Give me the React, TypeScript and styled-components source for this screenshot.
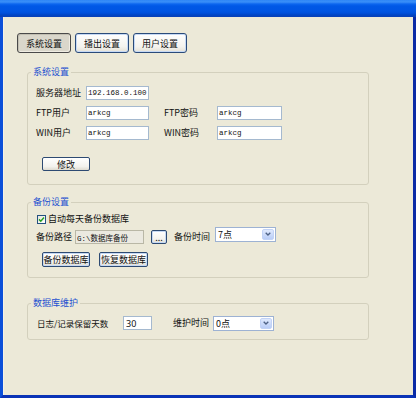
import React from "react";
import styled, { createGlobalStyle, css } from "styled-components";

const Global = createGlobalStyle`
  html, body { margin: 0; padding: 0; background: #ECE9D8; }
  * { box-sizing: border-box; }
`;

const CJK = `"Noto Sans CJK SC", "Noto Sans", sans-serif`;
const MONO = `"Liberation Mono", "Noto Sans CJK SC", monospace`;

const Window = styled.div`
  width: 416px;
  height: 398px;
  display: flex;
  flex-direction: column;
  background: #0a4fd8;
  font-family: ${CJK};
  font-size: 9px;
  color: #000;
`;

const TitleBar = styled.div`
  height: 17px;
  flex: none;
  background: linear-gradient(
    to bottom,
    #2f86f6 0px,
    #3a8ff8 2px,
    #0c66ef 4px,
    #0058e6 6px,
    #0055e3 11px,
    #0050dc 13px,
    #0045c4 15px,
    #0a3fb6 17px
  );
`;

const Frame = styled.div`
  flex: 1;
  display: flex;
  border-left: 3px solid #0b4fd9;
  border-right: 3px solid #0a2aa6;
  border-bottom: 3px solid #0a33b6;
  min-height: 0;
`;

const Client = styled.div`
  flex: 1;
  background: #ECE9D8;
  padding: 16px 0 0 14px;
  display: flex;
  flex-direction: column;
  box-shadow: inset 1px 0 0 #f4f1e6;
`;

const TabRow = styled.div`
  display: flex;
  gap: 4px;
`;

const TabButton = styled.div<{ $active?: boolean }>`
  width: 54px;
  height: 20px;
  display: flex;
  align-items: center;
  justify-content: center;
  border-radius: 3px;
  font-size: 9px;
  color: #111;
  ${(p) =>
    p.$active
      ? css`
          border: 1px solid #4a4a4a;
          background: #dad7cb;
          box-shadow: inset 1px 1px 0 #c2bfb2, inset -1px -1px 0 #efece2;
        `
      : css`
          border: 1px solid #2a4b7a;
          background: linear-gradient(#ffffff, #f4f3ee 70%, #e4e1d6);
          box-shadow: inset 0 0 0 1px #c6d9f4;
        `}
`;

const Groups = styled.div`
  margin-left: 10px;
  margin-top: 13px;
  width: 342px;
  display: flex;
  flex-direction: column;
`;

const Group = styled.fieldset<{ $pt: number; $pb: number; $mt?: number }>`
  margin: ${(p) => p.$mt ?? 0}px 0 0 0;
  padding: ${(p) => p.$pt}px 0 ${(p) => p.$pb}px 8px;
  border: 1px solid #d3d0bd;
  border-radius: 3px;
  min-width: 0;
`;

const Legend = styled.legend`
  margin-left: -5px;
  padding: 0 2px;
  height: 12px;
  line-height: 12px;
  font-size: 9px;
  color: #1d50d0;
`;

const FormGrid = styled.div`
  display: grid;
  grid-template-columns: 50px 63px 68px 65px;
  grid-auto-rows: 14px;
  row-gap: 6px;
  align-items: center;
`;

const Label = styled.span<{ $w?: number; $pl?: number; $fs?: number }>`
  display: inline-block;
  flex: none;
  ${(p) => (p.$w ? `width: ${p.$w}px;` : "")}
  padding-left: ${(p) => p.$pl ?? 0}px;
  font-size: ${(p) => p.$fs ?? 9}px;
  line-height: 12px;
  white-space: nowrap;
  color: #111;
`;

const TextField = styled.input<{ $w: number; $disabled?: boolean }>`
  width: ${(p) => p.$w}px;
  height: 14px;
  flex: none;
  margin: 0;
  padding: 0 1px;
  border: 1px solid ${(p) => (p.$disabled ? "#b9b7a6" : "#a5b9cf")};
  background: ${(p) => (p.$disabled ? "#ebe9e0" : "#fff")};
  font-family: ${MONO};
  font-size: 7.5px;
  color: #111;
  outline: none;
  border-radius: 0;
`;

const NumField = styled(TextField)`
  font-family: "Noto Sans", sans-serif;
  font-size: 9px;
  padding: 0 2px;
`;

const Row = styled.div<{ $mt?: number }>`
  display: flex;
  align-items: center;
  height: 14px;
  margin-top: ${(p) => p.$mt ?? 0}px;
`;

const Spacer = styled.span<{ $w: number }>`
  display: inline-block;
  flex: none;
  width: ${(p) => p.$w}px;
`;

const PushButton = styled.div<{ $w: number; $h?: number; $focus?: boolean }>`
  width: ${(p) => p.$w}px;
  height: ${(p) => p.$h ?? 14}px;
  flex: none;
  display: flex;
  align-items: center;
  justify-content: center;
  border: 1px solid #2d4a72;
  border-radius: 2px;
  background: linear-gradient(#ffffff, #f3f2ed 70%, #dedbd0);
  font-size: 9px;
  color: #111;
  line-height: 1;
  ${(p) => (p.$focus ? "box-shadow: inset 0 0 0 1px #c6d9f4;" : "")}
`;

const ButtonRow = styled.div<{ $mt: number }>`
  display: flex;
  gap: 9px;
  margin-top: ${(p) => p.$mt}px;
  padding-left: 6px;
`;

const CheckBox = styled.span`
  width: 9px;
  height: 9px;
  flex: none;
  margin-left: 1px;
  margin-right: 2px;
  border: 1px solid #24517f;
  background: linear-gradient(135deg, #e6e6dd, #ffffff);
  display: flex;
  align-items: center;
  justify-content: center;
`;

const SelectBox = styled.div<{ $up?: number }>`
  width: 61px;
  height: 15px;
  flex: none;
  display: flex;
  align-items: stretch;
  border: 1px solid #9db2d3;
  background: #fff;
  margin-top: ${(p) => -(p.$up ?? 0) * 2}px;
`;

const SelectText = styled.span`
  flex: 1;
  padding-left: 2px;
  font-size: 9px;
  line-height: 13px;
  color: #111;
`;

const SelectArrow = styled.span`
  width: 12px;
  flex: none;
  margin: 1px;
  border-radius: 2px;
  border: 1px solid #c2d3f6;
  background: linear-gradient(#dfe9fd, #b9cdf7);
  display: flex;
  align-items: center;
  justify-content: center;
`;

const Select = ({ value, up }: { value: string; up?: number }) => (
  <SelectBox $up={up}>
    <SelectText>{value}</SelectText>
    <SelectArrow>
      <svg width="6" height="4" viewBox="0 0 6 4">
        <path d="M0.7 0.7 L3 3 L5.3 0.7" fill="none" stroke="#4d6185" strokeWidth="1.3" />
      </svg>
    </SelectArrow>
  </SelectBox>
);

export default function App() {
  return (
    <>
      <Global />
      <Window>
        <TitleBar />
        <Frame>
          <Client>
            <TabRow>
              <TabButton $active>系统设置</TabButton>
              <TabButton>播出设置</TabButton>
              <TabButton>用户设置</TabButton>
            </TabRow>
            <Groups>
              <Group $pt={8} $pb={13}>
                <Legend>系统设置</Legend>
                <FormGrid>
                  <Label>服务器地址</Label>
                  <TextField $w={63} readOnly value="192.168.0.100" />
                  <span />
                  <span />
                  <Label>FTP用户</Label>
                  <TextField $w={63} readOnly value="arkcg" />
                  <Label $pl={15}>FTP密码</Label>
                  <TextField $w={65} readOnly value="arkcg" />
                  <Label>WIN用户</Label>
                  <TextField $w={63} readOnly value="arkcg" />
                  <Label $pl={15}>WIN密码</Label>
                  <TextField $w={65} readOnly value="arkcg" />
                </FormGrid>
                <ButtonRow $mt={17}>
                  <PushButton $w={48}>修改</PushButton>
                </ButtonRow>
              </Group>

              <Group $pt={4} $pb={10} $mt={11}>
                <Legend>备份设置</Legend>
                <Row>
                  <CheckBox>
                    <svg width="7" height="7" viewBox="0 0 7 7">
                      <path d="M1 3.4 L2.8 5.2 L6 1.6" fill="none" stroke="#21a121" strokeWidth="1.5" />
                    </svg>
                  </CheckBox>
                  <Label>自动每天备份数据库</Label>
                </Row>
                <Row $mt={4}>
                  <Label $w={39}>备份路径</Label>
                  <TextField $w={69} $disabled readOnly value="G:\数据库备份" />
                  <Spacer $w={7} />
                  <PushButton $w={16} $h={14} $focus>...</PushButton>
                  <Spacer $w={7} />
                  <Label $w={41}>备份时间</Label>
                  <Select value="7点" up={3} />
                </Row>
                <ButtonRow $mt={8}>
                  <PushButton $w={48} $h={15} $focus>备份数据库</PushButton>
                  <PushButton $w={49} $h={15} $focus>恢复数据库</PushButton>
                </ButtonRow>
              </Group>

              <Group $pt={7} $pb={9} $mt={19}>
                <Legend>数据库维护</Legend>
                <Row>
                  <Spacer $w={1} />
                  <Label $w={86} $fs={8.5}>日志/记录保留天数</Label>
                  <NumField $w={29} readOnly value="30" />
                  <Spacer $w={21} />
                  <Label $w={40}>维护时间</Label>
                  <Select value="0点" />
                </Row>
              </Group>
            </Groups>
          </Client>
        </Frame>
      </Window>
    </>
  );
}
